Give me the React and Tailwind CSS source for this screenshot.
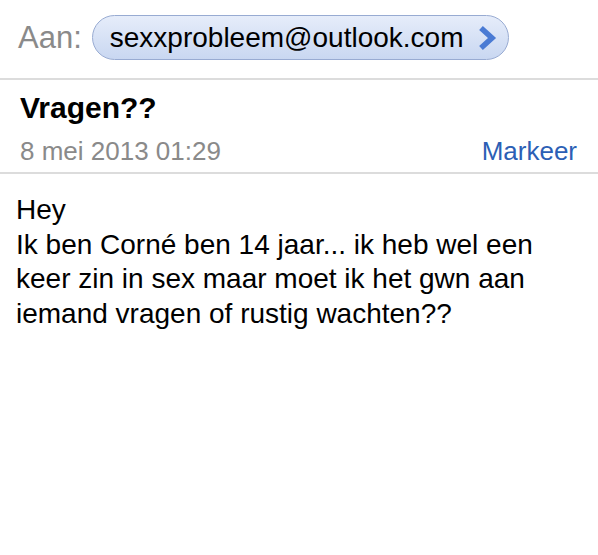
export default function App() {
  return (
    <div className="w-[598px] h-[555px] bg-white font-['Liberation_Sans',Arial,sans-serif] text-black overflow-hidden">
      <div className="flex items-center pl-[18px] pt-[15px] pb-[18px] gap-[10px]">
        <span className="text-[31px] leading-[34px] text-[#8a8a8a]">Aan:</span>
        <div className="h-[45px] w-[417px] rounded-full border border-[#98abd2] bg-gradient-to-b from-[#e6edfa] to-[#c9d7f1] flex items-center pl-[17px] pr-[10px] justify-between">
          <span className="text-[28px] leading-[34px] text-black">sexxprobleem@outlook.com</span>
          <svg width="20" height="26" viewBox="0 0 20 26" className="mr-[1px]">
            <path d="M4 3 L15 13 L4 23" fill="none" stroke="#4a7bd4" strokeWidth="5.5" strokeLinejoin="miter" strokeLinecap="butt" />
          </svg>
        </div>
      </div>
      <div className="h-[2px] bg-[#dcdcdc]" />
      <div className="pl-[20px] pr-[21px] pt-[11px] pb-[6px]">
        <div className="text-[30px] leading-[34px] font-bold">Vragen??</div>
        <div className="mt-[11px] flex justify-between items-center text-[26px] leading-[30px]">
          <span className="text-[#8a8a8a]">8 mei 2013 01:29</span>
          <span className="text-[#2c5fb5]">Markeer</span>
        </div>
      </div>
      <div className="h-[2px] bg-[#dcdcdc]" />
      <div className="pl-[16px] pr-[20px] pt-[19px] text-[28px] leading-[34.5px]">
        <div>Hey</div>
        <div>Ik ben Corné ben 14 jaar... ik heb wel een</div>
        <div>keer zin in sex maar moet ik het gwn aan</div>
        <div>iemand vragen of rustig wachten??</div>
      </div>
    </div>
  );
}
